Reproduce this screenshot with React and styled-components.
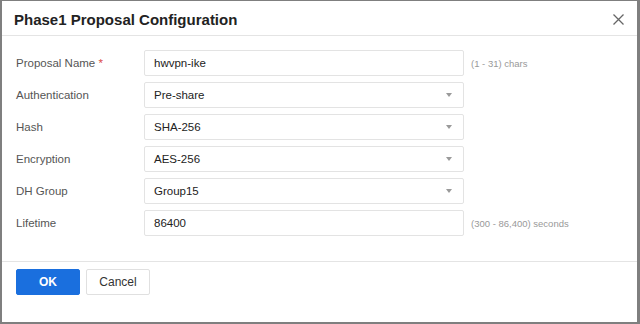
import styled, { createGlobalStyle } from 'styled-components'

const Global = createGlobalStyle`
  html, body { margin: 0; padding: 0; background: #fff; }
  body { font-family: "Liberation Sans", Arial, sans-serif; }
  * { box-sizing: border-box; }
`;

const fields = [
  { label: 'Proposal Name', required: true, value: 'hwvpn-ike', hint: '(1 - 31) chars' },
  { label: 'Authentication', value: 'Pre-share', select: true },
  { label: 'Hash', value: 'SHA-256', select: true },
  { label: 'Encryption', value: 'AES-256', select: true },
  { label: 'DH Group', value: 'Group15', select: true },
  { label: 'Lifetime', value: '86400', hint: '(300 - 86,400) seconds' },
];

const App = () => {
  return (
    <>
      <Global />
      <Dialog>
        <Header>
          <Title>Phase1 Proposal Configuration</Title>
          <Close aria-label="close">
            <svg width="11" height="11" viewBox="0 0 11 11">
              <path d="M0.5 0.5 L10.5 10.5 M10.5 0.5 L0.5 10.5" stroke="#666" strokeWidth="1.3" fill="none" />
            </svg>
          </Close>
        </Header>
        <Body>
          {fields.map((f) => (
            <Row key={f.label}>
              <Label>
                {f.label}
                {f.required && <Star> *</Star>}
              </Label>
              <Field>
                <span>{f.value}</span>
                {f.select && <Arrow />}
              </Field>
              {f.hint && <Hint>{f.hint}</Hint>}
            </Row>
          ))}
        </Body>
        <Footer>
          <Button $primary>OK</Button>
          <Button>Cancel</Button>
        </Footer>
      </Dialog>
    </>
  );
};

const Dialog = styled.div`
  width: 640px;
  height: 324px;
  background: #fff;
  border-style: solid;
  border-color: #7f7f7f;
  border-width: 1px 3px 2px 2px;
  display: flex;
  flex-direction: column;
`;

const Header = styled.div`
  height: 35px;
  flex-shrink: 0;
  display: flex;
  align-items: center;
  justify-content: space-between;
  padding: 0 13px 0 12px;
  border-bottom: 1px solid #e4e4e4;
`;

const Title = styled.div`
  font-size: 15px;
  font-weight: bold;
  color: #222;
  margin-top: 2px;
`;

const Close = styled.div`
  width: 11px;
  height: 11px;
  display: flex;
  margin-top: 3px;
`;

const Body = styled.div`
  padding: 14px 14px 25px 14px;
  display: flex;
  flex-direction: column;
  gap: 6px;
  border-bottom: 1px solid #e4e4e4;
`;

const Row = styled.div`
  display: flex;
  align-items: center;
  height: 26px;
`;

const Label = styled.div`
  width: 128px;
  font-size: 11.5px;
  color: #555;
`;

const Star = styled.span`
  color: #dc4a4a;
`;

const Field = styled.div`
  width: 320px;
  height: 26px;
  border: 1px solid #e3e3e3;
  border-radius: 2px;
  display: flex;
  align-items: center;
  justify-content: space-between;
  padding: 0 10px 0 9px;
  font-size: 11.5px;
  color: #222;
`;

const Arrow = styled.span`
  width: 0;
  height: 0;
  border-left: 3.5px solid transparent;
  border-right: 3.5px solid transparent;
  border-top: 4px solid #9a9a9a;
  margin-right: 1px;
`;

const Hint = styled.div`
  margin-left: 7px;
  font-size: 9.5px;
  color: #999;
`;

const Footer = styled.div`
  display: flex;
  gap: 6px;
  padding: 7px 14px 0 14px;
`;

const Button = styled.button`
  width: 64px;
  height: 26px;
  border-radius: 2px;
  font-family: "Liberation Sans", Arial, sans-serif;
  font-size: 12px;
  font-weight: ${(p) => (p.$primary ? 'bold' : 'normal')};
  color: ${(p) => (p.$primary ? '#fff' : '#333')};
  background: ${(p) => (p.$primary ? '#1a6fde' : '#fff')};
  border: 1px solid ${(p) => (p.$primary ? '#1a6fde' : '#e0e0e0')};
  padding: 0;
`;

export default App;
